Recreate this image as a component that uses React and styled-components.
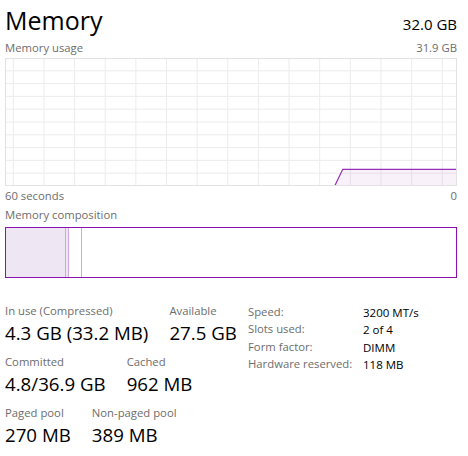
import styled, { createGlobalStyle } from "styled-components";

const GlobalStyle = createGlobalStyle`
  body {
    margin: 0;
    background: #ffffff;
    font-family: "Open Sans", "Noto Sans", sans-serif;
    color: #000000;
  }
`;

const GRAPH_W = 452;
const GRAPH_H = 128;

const stats = [
  [
    { label: "In use (Compressed)", value: "4.3 GB (33.2 MB)" },
    { label: "Available", value: "27.5 GB" },
  ],
  [
    { label: "Committed", value: "4.8/36.9 GB" },
    { label: "Cached", value: "962 MB" },
  ],
  [
    { label: "Paged pool", value: "270 MB" },
    { label: "Non-paged pool", value: "389 MB" },
  ],
];

const specs = [
  ["Speed:", "3200 MT/s"],
  ["Slots used:", "2 of 4"],
  ["Form factor:", "DIMM"],
  ["Hardware reserved:", "118 MB"],
];

function UsageGraph() {
  const vLines = [];
  for (let x = 8.3; x < GRAPH_W; x += 30.64) vLines.push(x);
  const hLines = [];
  for (let i = 1; i < 10; i++) hLines.push(i * 12.8);
  const lineY = 111.3;
  return (
    <svg width={GRAPH_W} height={GRAPH_H} style={{ display: "block" }}>
      <rect x="0" y="0" width={GRAPH_W} height={GRAPH_H} fill="#ffffff" />
      {vLines.map((x) => (
        <line key={"v" + x} x1={x} y1="0" x2={x} y2={GRAPH_H} stroke="#ececec" strokeWidth="1" />
      ))}
      {hLines.map((y) => (
        <line key={"h" + y} x1="0" y1={y} x2={GRAPH_W} y2={y} stroke="#ececec" strokeWidth="1" />
      ))}
      <polygon
        points={`329.7,${GRAPH_H} 337.7,${lineY} ${GRAPH_W},${lineY} ${GRAPH_W},${GRAPH_H}`}
        fill="rgba(139,18,174,0.06)"
      />
      <polyline
        points={`329.7,${GRAPH_H} 337.7,${lineY} ${GRAPH_W},${lineY}`}
        fill="none"
        stroke="#9530b6"
        strokeWidth="1.2"
      />
      <rect x="0.5" y="0.5" width={GRAPH_W - 1} height={GRAPH_H - 1} fill="none" stroke="#e2e2e2" />
    </svg>
  );
}

export default function App() {
  return (
    <>
      <GlobalStyle />
      <Page>
        <Header>
          <Title>Memory</Title>
          <Total>32.0 GB</Total>
        </Header>
        <SmallRow>
          <span>Memory usage</span>
          <span>31.9 GB</span>
        </SmallRow>
        <GraphBox>
          <UsageGraph />
        </GraphBox>
        <SmallRow $top={2}>
          <span>60 seconds</span>
          <span>0</span>
        </SmallRow>
        <SmallRow $top={3}>
          <span>Memory composition</span>
        </SmallRow>
        <Composition>
          <Segment $width={59} $fill="#efe6f3" />
          <Segment $width={2} $fill="#efe6f3" />
          <Segment $width={12} $fill="#ffffff" />
          <Segment $grow $fill="#ffffff" $last />
        </Composition>
        <Bottom>
          <div>
            {stats.map((row, i) => (
              <StatRow key={i}>
                {row.map((s) => (
                  <Stat key={s.label}>
                    <Label>{s.label}</Label>
                    <Value>{s.value}</Value>
                  </Stat>
                ))}
              </StatRow>
            ))}
          </div>
          <Specs>
            {specs.map(([k, v]) => (
              <SpecRow key={k}>
                <Label>{k}</Label>
                <SpecValue>{v}</SpecValue>
              </SpecRow>
            ))}
          </Specs>
        </Bottom>
      </Page>
    </>
  );
}

const Page = styled.div`
  width: 468px;
  height: 456px;
  box-sizing: border-box;
  padding: 0 11px 0 5px;
  overflow: hidden;
`;

const Header = styled.div`
  display: flex;
  justify-content: space-between;
  align-items: baseline;
  height: 40px;
  padding-top: 2px;
  box-sizing: border-box;
`;

const Title = styled.div`
  font-size: 25px;
  line-height: 36px;
  font-weight: 400;
`;

const Total = styled.div`
  font-size: 15px;
  line-height: 20px;
`;

const SmallRow = styled.div`
  display: flex;
  justify-content: space-between;
  height: 16px;
  line-height: 16px;
  font-size: 11.3px;
  color: #6d6d6d;
  margin-top: ${(p) => p.$top || 0}px;
`;

const GraphBox = styled.div`
  margin-top: 2px;
`;

const Composition = styled.div`
  display: flex;
  height: 51px;
  margin-top: 4px;
  border: 1px solid #8b12ae;
  box-sizing: border-box;
`;

const Segment = styled.div`
  flex: ${(p) => (p.$grow ? "1 1 auto" : `0 0 ${p.$width}px`)};
  background: ${(p) => p.$fill};
  border-right: ${(p) => (p.$last ? "none" : "1px solid #d3a8e0")};
`;

const Bottom = styled.div`
  display: grid;
  grid-template-columns: 243px 1fr;
  margin-top: 25px;
`;

const StatRow = styled.div`
  display: flex;
  gap: 21px;
  margin-bottom: 9px;
`;

const Stat = styled.div`
  display: flex;
  flex-direction: column;
  gap: 2px;
`;

const Label = styled.div`
  font-size: 11.3px;
  line-height: 16px;
  color: #6d6d6d;
  white-space: nowrap;
`;

const Value = styled.div`
  font-size: 18.7px;
  line-height: 24px;
  white-space: nowrap;
`;

const Specs = styled.div`
  padding-top: 1px;
`;

const SpecRow = styled.div`
  display: grid;
  grid-template-columns: 115px 1fr;
  height: 17.3px;
  line-height: 17.3px;
`;

const SpecValue = styled.div`
  font-size: 11.5px;
  color: #000000;
  white-space: nowrap;
`;
